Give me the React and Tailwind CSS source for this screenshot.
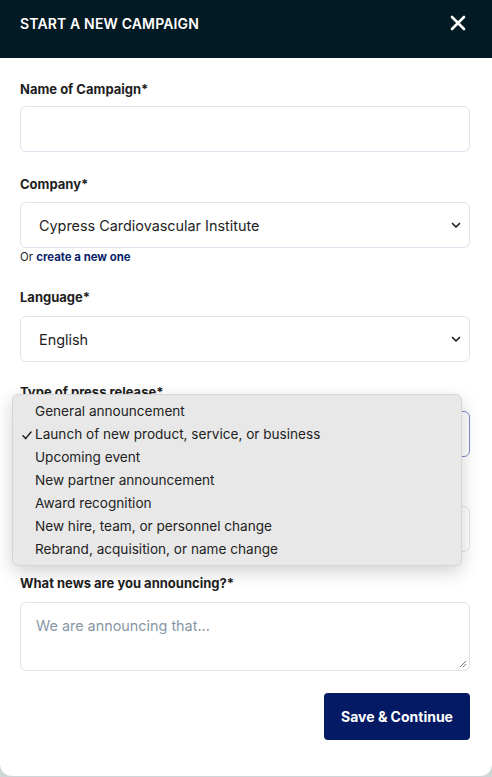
import React from "react";

function Chevron() {
  return (
    <svg width="10" height="7" viewBox="0 0 10 7" className="shrink-0">
      <path d="M1.5 1.5 L5 5 L8.5 1.5" fill="none" stroke="#222" strokeWidth="1.7" strokeLinecap="round" strokeLinejoin="round" />
    </svg>
  );
}

function Label({ children, className = "" }) {
  return (
    <div className={"text-[13px] leading-[16px] font-bold text-[#1e1e1e] " + className}>{children}</div>
  );
}

function SelectBox({ value, focused }) {
  return (
    <div
      className={
        "h-[46px] rounded-[6px] border bg-white flex items-center justify-between pl-[18px] pr-[8px] text-[14.4px] leading-[20px] text-[#1e1e1e] " +
        (focused ? "border-[#7d8cc4]" : "border-[#e1e4ef]")
      }
    >
      <span className="pt-[1px]">{value}</span>
      <Chevron />
    </div>
  );
}

const options = [
  "General announcement",
  "Launch of new product, service, or business",
  "Upcoming event",
  "New partner announcement",
  "Award recognition",
  "New hire, team, or personnel change",
  "Rebrand, acquisition, or name change",
];

export default function App() {
  return (
    <div className="w-[492px] h-[777px] bg-[#cfd6d6] font-['Inter',sans-serif]">
      <div className="relative h-[776px] bg-white rounded-b-[12px] overflow-hidden">
        <div className="h-[58px] bg-[#021a23] flex items-start justify-between pl-[20px] pr-[26px] pt-[15px]">
          <div className="text-[14px] leading-[18px] font-semibold text-white tracking-[0.15px]">START A NEW CAMPAIGN</div>
          <svg width="16" height="16" viewBox="0 0 16 16">
            <path d="M2 2 L14 14 M14 2 L2 14" stroke="white" strokeWidth="2.6" strokeLinecap="round" />
          </svg>
        </div>

        <div className="pl-[20px] pr-[22px] pt-[23px]">
          <Label>Name of Campaign*</Label>
          <div className="mt-[9px] h-[46px] rounded-[6px] border border-[#e1e4ef] bg-white" />

          <Label className="mt-[24px]">Company*</Label>
          <div className="mt-[10px]">
            <SelectBox value="Cypress Cardiovascular Institute" />
          </div>
          <div className="mt-[2px] text-[11.4px] leading-[14px] text-[#222]">
            Or <span className="font-bold text-[#0b1f6b]">create a new one</span>
          </div>

          <Label className="mt-[25px]">Language*</Label>
          <div className="mt-[11px]">
            <SelectBox value="English" />
          </div>

          <Label className="mt-[22px]">Type of press release*</Label>
          <div className="mt-[11px]">
            <SelectBox value="Launch of new product, service, or business" focused />
          </div>

          <Label className="mt-[22px]">Boilerplate*</Label>
          <div className="mt-[11px] h-[46px] rounded-[6px] border border-[#e1e4ef] bg-white" />

          <Label className="mt-[23px]">What news are you announcing?*</Label>
          <div className="mt-[11px] relative h-[69px] rounded-[6px] border border-[#e1e4ef] bg-white px-[15px] pt-[13px] text-[14.4px] leading-[20px] text-[#8797a6]">
            We are announcing that...
            <svg width="8" height="8" viewBox="0 0 8 8" className="absolute right-[2px] bottom-[2px]">
              <path d="M7 1 L1 7 M7 4 L4 7" stroke="#666" strokeWidth="0.9" />
            </svg>
          </div>

          <div className="mt-[22px] flex justify-end">
            <div className="h-[47px] w-[146px] rounded-[4px] bg-[#041a64] flex items-center justify-center text-[14px] font-bold text-white">
              Save &amp; Continue
            </div>
          </div>
        </div>

        <div className="absolute left-[12px] top-[394px] w-[450px] rounded-[6px] bg-[#e8e8e8] border border-[#d6d6d6] shadow-[0_6px_18px_rgba(0,0,0,0.18)] pt-[5px] pb-[4px]">
          {options.map((o, i) => (
            <div key={o} className="relative h-[23px] flex items-center pl-[22px] text-[13.6px] text-[#222]">
              {i === 1 && (
                <svg width="10" height="9" viewBox="0 0 10 9" className="absolute left-[9px] top-[8px]">
                  <path d="M1 4.8 L3.6 7.6 L9 1" fill="none" stroke="#222" strokeWidth="1.5" strokeLinecap="round" strokeLinejoin="round" />
                </svg>
              )}
              {o}
            </div>
          ))}
        </div>
      </div>
    </div>
  );
}
